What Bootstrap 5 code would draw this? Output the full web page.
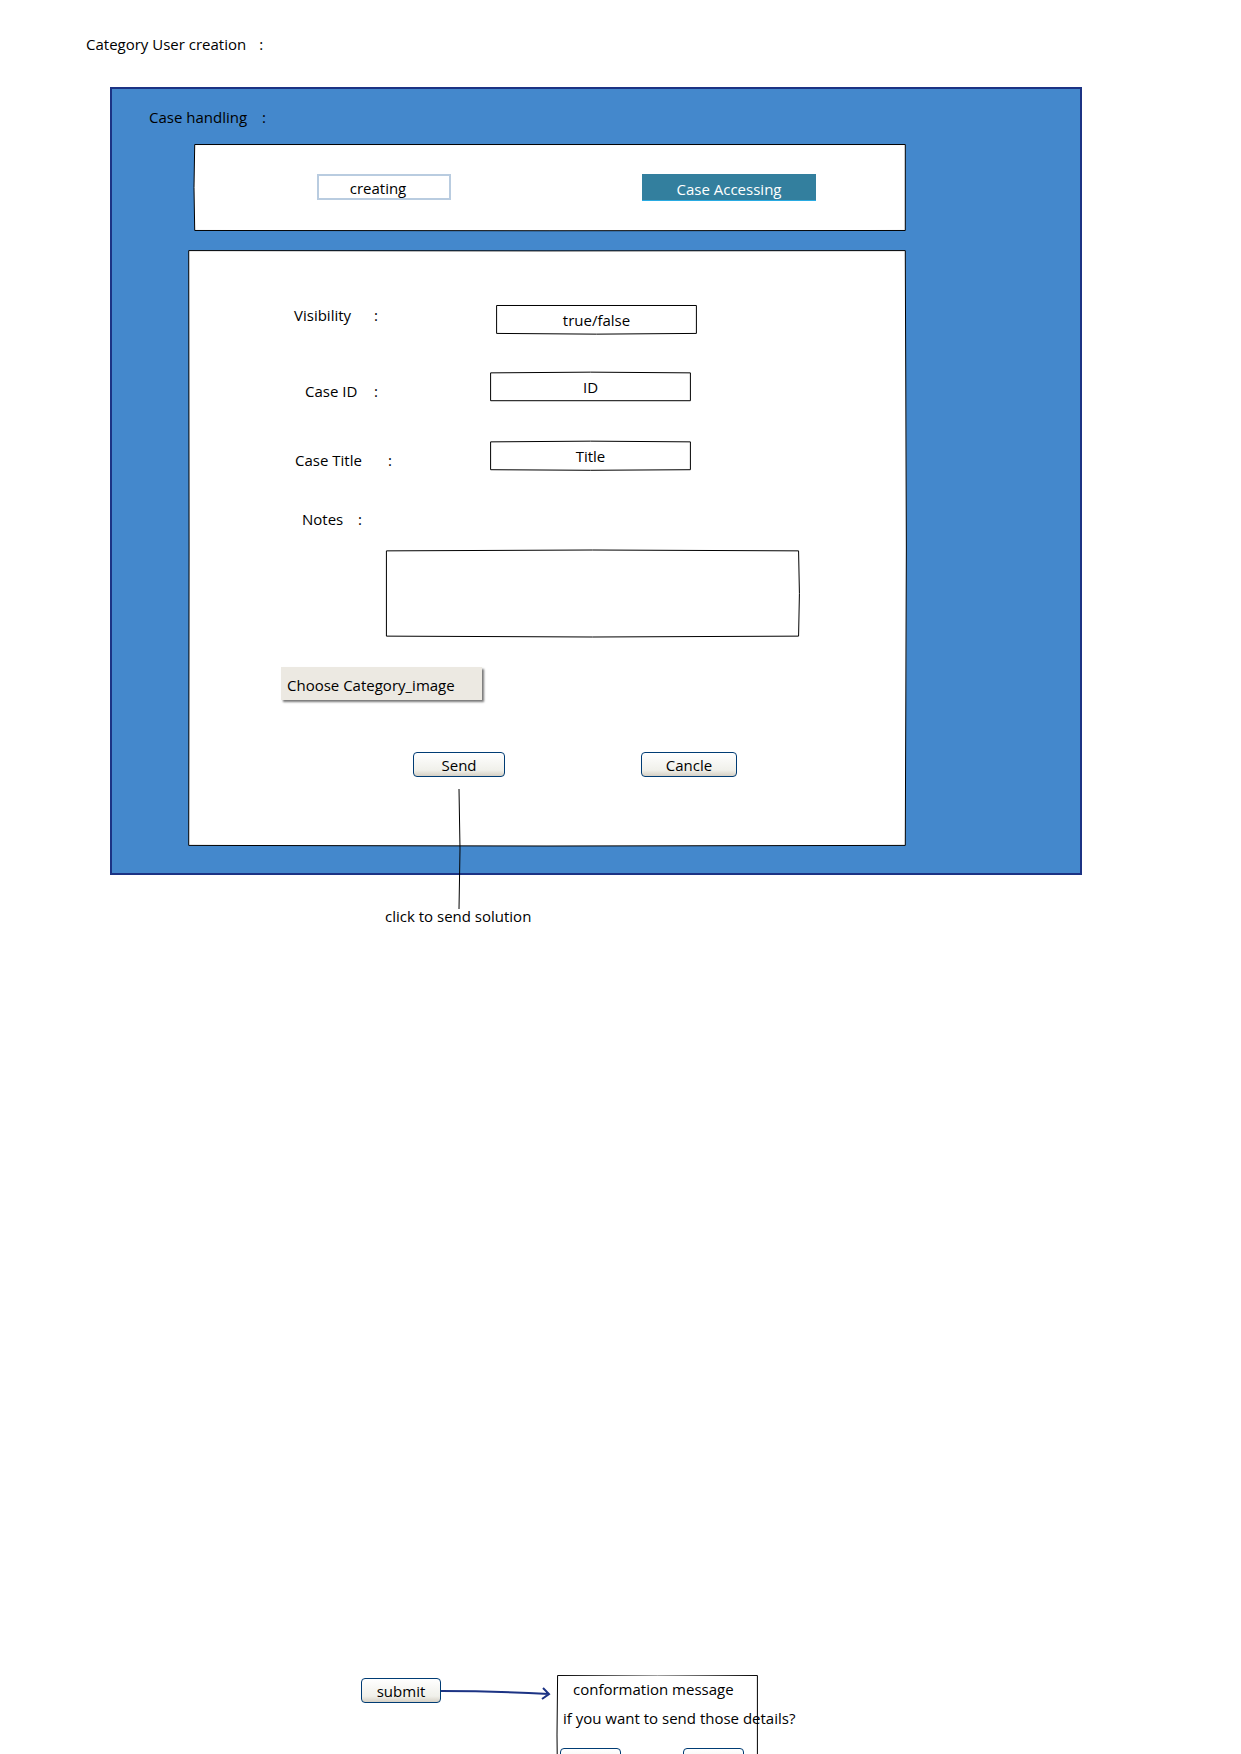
<!DOCTYPE html>
<html lang="en">
<head>
<meta charset="utf-8">
<meta name="viewport" content="width=device-width, initial-scale=1">
<title>Category User creation</title>
<link href="https://cdn.jsdelivr.net/npm/bootstrap@5.3.0/dist/css/bootstrap.min.css" rel="stylesheet">
<style>
  body { font-family: "Comic Sans MS", "Open Sans", sans-serif; font-size: 15px; line-height: 20px; color: #000; background: #fff; }
  .page { min-height: 100vh; }
  .page-title { font-size: 15px; line-height: 20px; padding: 34px 0 0 86px; }
  .page-title .colon { margin-left: 13px; }
  .case-panel { margin: 33px 159px 0 110px; padding: 18px 174px 27px 76px; background: #4488cc; border: 2px solid #1c3384; }
  .case-heading { font-size: 15px; line-height: 20px; margin-left: -39px; }
  .case-heading .colon { margin-left: 15px; }

  /* hand-drawn frame stretched over its box */
  .sketch-box { position: relative; }
  .frame-line { position: absolute; inset: 0; width: 100%; height: 100%; overflow: visible; pointer-events: none; }
  .frame-line path { fill: none; stroke: #000; stroke-width: 1; vector-effect: non-scaling-stroke; }
  .frame-fill path { fill: #fff; }
  .sketch-box > :not(.frame-line) { position: relative; }

  .tab-box { margin: 17px 0 19px 6px; padding: 30px 90px 30px 123px; }
  .tab-plain, .tab-solid { border-radius: 0; font-size: 15px; line-height: 20px; }
  .tab-plain { width: 134px; height: 26px; padding: 1px 12px 0 0; border: 2px solid #b9cce0; background: #fff; color: #000; }
  .tab-solid { width: 174px; height: 27px; padding: 4px 0 0; border: 0; border-bottom: 1px solid #29abe2; background: #337f9e; color: #fff; }

  .form-box { padding: 55px 107px 69px 93px; }
  .entry { margin-bottom: 38px; padding-left: 13px; height: 29px; }
  .entry-name { display: inline-block; width: 80px; }
  .entry label, .notes-label { width: 202px; white-space: nowrap; }
  .entry-id { padding-left: 24px; margin-bottom: 40px; }
  .entry-id label { width: 185px; }
  .entry-id .entry-name { width: 69px; }
  .entry-title { padding-left: 14px; }
  .entry-title label { width: 195px; }
  .entry-title .entry-name { width: 93px; }
  .notes-label { padding-left: 21px; }
  .notes-label .entry-name { width: 56px; }
  .entry-input { width: 201px; height: 29px; }
  .entry-input input, .notes-area textarea { display: block; width: 100%; height: 100%; border: 0; background: transparent; font-size: 15px; color: #000; }
  .entry-input input { text-align: center; padding: 1px 0 0; }
  .notes-label { margin-top: 39px; }
  .notes-area { height: 87px; margin: 21px 0 30px 105px; }
  .notes-area textarea { resize: none; padding: 6px; }
  .btn-choose { width: 201px; height: 33px; padding: 3px 6px 0; border: 0; border-radius: 0; background: #ece9e2; box-shadow: 2px 2px 2px #777; text-align: left; font-size: 15px; line-height: 20px; color: #000; }
  .form-actions { margin: 52px 0 0 132px; gap: 136px; }
  .btn-soft { height: 25px; padding: 1px 0 0; border: 1px solid #003c74; border-radius: 4px; background: linear-gradient(#fff, #f0f0ea 75%, #d6d0c5); font-size: 15px; line-height: 20px; color: #000; }
  .btn-send { width: 92px; }
  .btn-cancel { width: 96px; }
  .send-wrap { position: relative; }
  .send-line { position: absolute; left: 45px; top: 37px; width: 4px; height: 120px; z-index: 2; }
  .send-note { margin: 31px 0 0 385px; }

  .confirm-strip { padding-left: 361px; height: 79px; overflow: hidden; }
  .btn-submit { width: 80px; margin-top: 3px; }
  .arrow { width: 110px; height: 20px; margin: 8px 6px 0 0; }
  .confirm-box { width: 201px; height: 120px; padding: 4px 0 0 3px; white-space: nowrap; }
  .confirm-head { margin: 0 0 9px 13px; }
  .confirm-text { margin: 0 0 20px 3px; }
  .btn-answer { width: 61px; }
  .answers { padding-right: 14px; }
</style>
</head>
<body>
<div class="page d-flex flex-column overflow-hidden">
  <h1 class="page-title mb-0 fw-normal">Category User creation<span class="colon">:</span></h1>

  <main class="case-panel">
    <h2 class="case-heading mb-0 fw-normal">Case handling<span class="colon">:</span></h2>

    <div class="sketch-box tab-box d-flex justify-content-between align-items-start">
      <svg class="frame-line frame-fill" viewBox="0 0 100 100" preserveAspectRatio="none" aria-hidden="true"><path d="M0.1 0.6H99.9V99.4Q50 100 0.1 99.4Q-0.1 50 0.1 0.6Z"/></svg>
      <button type="button" class="btn tab-plain">creating</button>
      <button type="button" class="btn tab-solid">Case Accessing</button>
    </div>

    <form class="sketch-box form-box">
      <svg class="frame-line frame-fill" viewBox="0 0 100 100" preserveAspectRatio="none" aria-hidden="true"><path d="M0.1 0.1Q50 0.2 99.9 0.1Q100.2 50 99.9 99.9Q50 100.1 0.1 99.9Q0.2 50 0.1 0.1Z"/></svg>

      <div class="entry d-flex align-items-start">
        <label for="visibility"><span class="entry-name">Visibility</span>:</label>
        <div class="sketch-box entry-input">
          <svg class="frame-line" viewBox="0 0 100 100" preserveAspectRatio="none" aria-hidden="true"><path d="M0.3 1.7H99.7V98Q50 103 0.3 98Z"/></svg>
          <input id="visibility" type="text" value="true/false">
        </div>
      </div>
      <div class="entry entry-id d-flex align-items-end">
        <label for="case-id"><span class="entry-name">Case ID</span>:</label>
        <div class="sketch-box entry-input">
          <svg class="frame-line" viewBox="0 0 100 100" preserveAspectRatio="none" aria-hidden="true"><path d="M0.3 3Q50 -2 99.7 3V99H0.3Z"/></svg>
          <input id="case-id" type="text" value="ID">
        </div>
      </div>
      <div class="entry entry-title d-flex align-items-end mb-0">
        <label for="case-title"><span class="entry-name">Case Title</span>:</label>
        <div class="sketch-box entry-input">
          <svg class="frame-line" viewBox="0 0 100 100" preserveAspectRatio="none" aria-hidden="true"><path d="M0.3 3Q50 -2 99.7 3V99Q50 103 0.3 99Z"/></svg>
          <input id="case-title" type="text" value="Title">
        </div>
      </div>

      <label class="notes-label d-block" for="notes"><span class="entry-name">Notes</span>:</label>
      <div class="sketch-box notes-area">
        <svg class="frame-line" viewBox="0 0 100 100" preserveAspectRatio="none" aria-hidden="true"><path d="M0.1 1Q50 -1 99.9 1Q100.3 50 99.9 99Q50 101 0.1 99Z"/></svg>
        <textarea id="notes"></textarea>
      </div>

      <button type="button" class="btn btn-choose d-block">Choose Category_image</button>

      <div class="form-actions d-flex">
        <div class="send-wrap">
          <button type="button" class="btn btn-soft btn-send d-block">Send</button>
          <svg class="send-line" viewBox="0 0 4 120" aria-hidden="true"><path d="M1 0Q3 60 1 120" fill="none" stroke="#000"/></svg>
        </div>
        <button type="button" class="btn btn-soft btn-cancel">Cancle</button>
      </div>
    </form>
  </main>

  <p class="send-note mb-0">click to send solution</p>

  <section class="confirm-strip d-flex align-items-start mt-auto">
    <button type="button" class="btn btn-soft btn-submit flex-shrink-0">submit</button>
    <svg class="arrow flex-shrink-0" viewBox="0 0 110 20" aria-hidden="true"><path d="M0 8Q55 8 108 11M102 5L108 11L101 16" fill="none" stroke="#1c3384" stroke-width="2"/></svg>
    <div class="sketch-box confirm-box flex-shrink-0">
      <svg class="frame-line" viewBox="0 0 100 100" preserveAspectRatio="none" aria-hidden="true"><path d="M0.3 0.4Q50 -0.6 99.7 0.4V99.5H0.3Q-0.3 50 0.3 0.4Z"/></svg>
      <p class="confirm-head">conformation message</p>
      <p class="confirm-text">if you want to send those details?</p>
      <div class="answers d-flex justify-content-between">
        <button type="button" class="btn btn-soft btn-answer"></button>
        <button type="button" class="btn btn-soft btn-answer"></button>
      </div>
    </div>
  </section>
</div>
<script src="https://cdn.jsdelivr.net/npm/bootstrap@5.3.0/dist/js/bootstrap.bundle.min.js"></script>
</body>
</html>
